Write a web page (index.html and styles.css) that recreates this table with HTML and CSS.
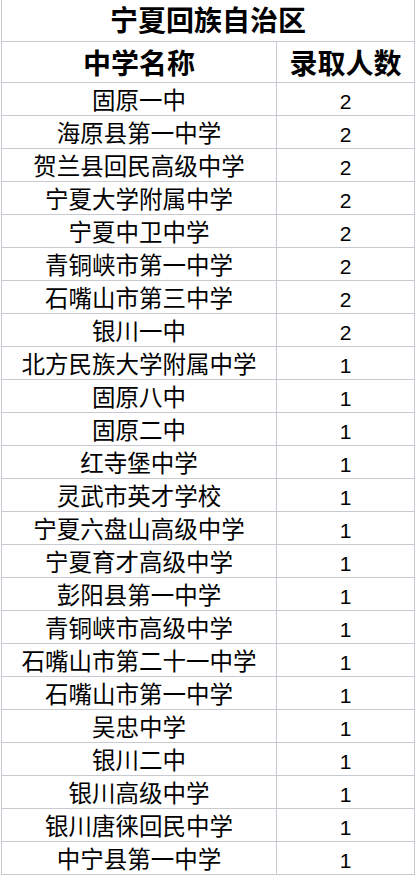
FILE: index.html
```html
<!DOCTYPE html>
<html lang="zh-CN">
<head>
<meta charset="utf-8">
<title>宁夏回族自治区</title>
<link rel="stylesheet" href="styles.css">
</head>
<body>
<div class="sheet">
  <div class="title">宁夏回族自治区</div>
  <div class="row head"><div class="name">中学名称</div><div class="num">录取人数</div></div>
  <div class="row"><div class="name">固原一中</div><div class="num">2</div></div>
  <div class="row"><div class="name">海原县第一中学</div><div class="num">2</div></div>
  <div class="row"><div class="name">贺兰县回民高级中学</div><div class="num">2</div></div>
  <div class="row"><div class="name">宁夏大学附属中学</div><div class="num">2</div></div>
  <div class="row"><div class="name">宁夏中卫中学</div><div class="num">2</div></div>
  <div class="row"><div class="name">青铜峡市第一中学</div><div class="num">2</div></div>
  <div class="row"><div class="name">石嘴山市第三中学</div><div class="num">2</div></div>
  <div class="row"><div class="name">银川一中</div><div class="num">2</div></div>
  <div class="row"><div class="name">北方民族大学附属中学</div><div class="num">1</div></div>
  <div class="row"><div class="name">固原八中</div><div class="num">1</div></div>
  <div class="row"><div class="name">固原二中</div><div class="num">1</div></div>
  <div class="row"><div class="name">红寺堡中学</div><div class="num">1</div></div>
  <div class="row"><div class="name">灵武市英才学校</div><div class="num">1</div></div>
  <div class="row"><div class="name">宁夏六盘山高级中学</div><div class="num">1</div></div>
  <div class="row"><div class="name">宁夏育才高级中学</div><div class="num">1</div></div>
  <div class="row"><div class="name">彭阳县第一中学</div><div class="num">1</div></div>
  <div class="row"><div class="name">青铜峡市高级中学</div><div class="num">1</div></div>
  <div class="row"><div class="name">石嘴山市第二十一中学</div><div class="num">1</div></div>
  <div class="row"><div class="name">石嘴山市第一中学</div><div class="num">1</div></div>
  <div class="row"><div class="name">吴忠中学</div><div class="num">1</div></div>
  <div class="row"><div class="name">银川二中</div><div class="num">1</div></div>
  <div class="row"><div class="name">银川高级中学</div><div class="num">1</div></div>
  <div class="row"><div class="name">银川唐徕回民中学</div><div class="num">1</div></div>
  <div class="row"><div class="name">中宁县第一中学</div><div class="num">1</div></div>
</div>
</body>
</html>
```
FILE: styles.css
```css
html, body {
  margin: 0;
  padding: 0;
  background: #ffffff;
}
body {
  font-family: "Liberation Sans", "Noto Sans CJK SC", sans-serif;
  color: #000;
}
.sheet {
  margin-left: 1px;
  width: 414px;
  box-sizing: border-box;
  border-left: 1px solid #c9c9d3;
  border-right: 1px solid #c9c9d3;
}
.title {
  box-sizing: border-box;
  height: 42px;
  border-bottom: 1px solid #c9c9d1;
  text-align: center;
  font-size: 28px;
  font-weight: bold;
  padding-top: 8px;
  line-height: 28px;
}
.row {
  display: grid;
  grid-template-columns: 275px 1fr;
  box-sizing: border-box;
  height: 33px;
  border-bottom: 1px solid #c9c9d1;
}
.row > div {
  text-align: center;
  white-space: nowrap;
}
.name {
  border-right: 1px solid #c9c9d1;
  font-size: 23.5px;
  padding-top: 5px;
  line-height: 27px;
}
.num {
  font-size: 21px;
  padding-top: 5px;
  line-height: 27px;
}
.head {
  height: 41px;
}
.head > div {
  font-size: 28px;
  font-weight: bold;
  padding-top: 8px;
  line-height: 29px;
}
```
